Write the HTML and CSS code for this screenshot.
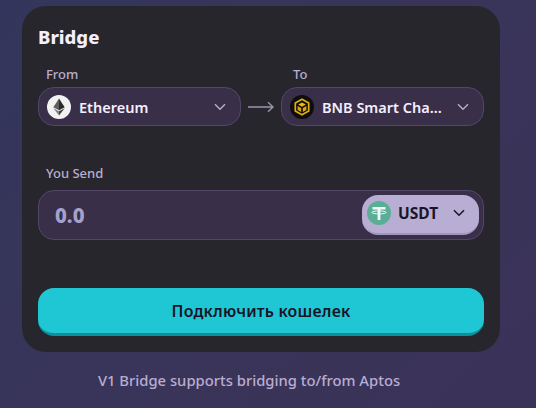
FILE: index.html
```html
<!DOCTYPE html>
<html lang="ru">
<head>
<meta charset="utf-8">
<title>Bridge</title>
<link rel="stylesheet" href="styles.css">
</head>
<body>
<main class="page">
  <section class="card">
    <h1 class="title">Bridge</h1>
    <div class="chains">
      <div class="field">
        <label class="label">From</label>
        <button class="select">
          <svg class="coin" viewBox="0 0 24 24"><circle cx="12" cy="12" r="12" fill="#f3f2f3"/><path d="M12 3.5 6.3 12.2 12 15.2z" fill="#5f5f5f"/><path d="M12 3.5 17.7 12.2 12 15.2z" fill="#2a2a2a"/><path d="M6.3 13.2 12 20.5V16.3z" fill="#858585"/><path d="M17.7 13.2 12 20.5V16.3z" fill="#454545"/></svg>
          <span class="select-text">Ethereum</span>
          <svg class="chev" viewBox="0 0 12 8"><path d="M1 1.2 6 6.2 11 1.2"/></svg>
        </button>
      </div>
      <svg class="arrow" viewBox="0 0 26 12"><path d="M0 6H25M20 1.2 25 6 20 10.8"/></svg>
      <div class="field">
        <label class="label label-to">To</label>
        <button class="select">
          <svg class="coin" viewBox="0 0 24 24"><circle cx="12" cy="12" r="12" fill="#0e0e0e"/><path d="M12 4.2 18.7 8V16L12 19.8 5.3 16V8z" fill="none" stroke="#e2ae0f" stroke-width="1.7"/><path d="M12 7.4 15.8 9.6 12 11.8 8.2 9.6z" fill="#f0b90b"/><path d="M7.6 11 11.2 13.1V17L7.6 15z" fill="#d9a509"/><path d="M16.4 11 12.8 13.1V17L16.4 15z" fill="#d9a509"/></svg>
          <span class="select-text">BNB Smart Chain</span>
          <svg class="chev" viewBox="0 0 12 8"><path d="M1 1.2 6 6.2 11 1.2"/></svg>
        </button>
      </div>
    </div>
    <label class="label send-label">You Send</label>
    <div class="amount">
      <span class="amount-value">0.0</span>
      <button class="token">
        <svg class="coin" viewBox="0 0 24 24"><circle cx="12" cy="12" r="12" fill="#5aae95"/><path d="M5.5 6H18.5V8.6H13.4V19H10.6V8.6H5.5z" fill="#f1f7f4"/><ellipse cx="12" cy="11.4" rx="7.2" ry="1.5" fill="none" stroke="#f1f7f4" stroke-width="1"/></svg>
        <span class="token-text">USDT</span>
        <svg class="chev dark" viewBox="0 0 12 8"><path d="M1 1.2 6 6.2 11 1.2"/></svg>
      </button>
    </div>
    <button class="connect">Подключить кошелек</button>
  </section>
  <p class="note">V1 Bridge supports bridging to/from Aptos</p>
</main>
</body>
</html>
```
FILE: styles.css
```css
* { box-sizing: border-box; }
html, body { height: 100%; }
body {
  margin: 0;
  overflow: hidden;
  background: linear-gradient(135deg, #33365c 0%, #3a3459 60%, #3b3258 100%);
  font-family: "Noto Sans", "Open Sans", sans-serif;
}
.page { width: 478px; margin-left: 22px; padding-top: 6px; }
.card {
  height: 346px;
  padding: 16px;
  background: #27262c;
  border-radius: 24px;
  display: flex;
  flex-direction: column;
}
.title {
  margin: 4px 0 0;
  font-size: 18.5px;
  line-height: 22px;
  font-weight: 800;
  color: #f4eeff;
}
.chains {
  margin-top: 17px;
  display: flex;
  align-items: flex-end;
  justify-content: space-between;
}
.field { width: 203px; display: flex; flex-direction: column; }
.label {
  display: block;
  padding-left: 8px;
  font-size: 13px;
  line-height: 18px;
  font-weight: 500;
  color: #b8add2;
}
.label-to { padding-left: 12px; }
.select {
  margin-top: 4px;
  height: 39px;
  padding: 0 14px 0 8px;
  display: flex;
  align-items: center;
  background: #392f49;
  border: 1px solid #544669;
  border-radius: 16px;
  font: inherit;
}
.coin { width: 24px; height: 24px; flex: none; display: block; }
.select-text {
  flex: 1;
  min-width: 0;
  margin-left: 8px;
  font-size: 14.5px;
  font-weight: 600;
  color: #f4eeff;
  text-align: left;
  white-space: nowrap;
  overflow: hidden;
  text-overflow: ellipsis;
  padding-right: 14px;
}
.chev {
  width: 12px;
  height: 8px;
  flex: none;
  fill: none;
  stroke: #b8add2;
  stroke-width: 1.4;
}
.chev.dark { stroke: #1a1628; stroke-width: 1.6; }
.arrow {
  width: 26px;
  height: 12px;
  margin-bottom: 13px;
  fill: none;
  stroke: #9c95ab;
  stroke-width: 1.4;
}
.send-label { margin-top: 38px; }
.amount {
  margin-top: 8px;
  height: 50px;
  padding: 0 4px 0 16px;
  display: flex;
  align-items: center;
  justify-content: space-between;
  background: #392f49;
  border: 1px solid #544669;
  border-radius: 16px;
}
.amount-value {
  font-size: 20.5px;
  font-weight: 800;
  color: #a7a1c9;
}
.token {
  width: 117px;
  height: 40px;
  padding: 0 14px 2px 5px;
  display: flex;
  align-items: center;
  background: #b8add2;
  border: 0;
  border-bottom: 2px solid #a297bd;
  border-radius: 16px;
  font: inherit;
}
.token-text {
  flex: 1;
  margin-left: 7px;
  font-size: 15.5px;
  font-weight: 700;
  color: #1a1628;
  text-align: left;
}
.connect {
  margin-top: 48px;
  height: 48px;
  background: #1fc7d4;
  border: 0;
  border-bottom: 3px solid #0e8f9b;
  border-radius: 16px;
  font-family: inherit;
  font-size: 15.9px;
  font-weight: 600;
  letter-spacing: 0.2px;
  color: #191326;
}
.note {
  margin: 18px 0 0;
  padding-right: 24px;
  font-size: 14.8px;
  line-height: 20px;
  font-weight: 500;
  color: #b8add2;
  text-align: center;
}
```
